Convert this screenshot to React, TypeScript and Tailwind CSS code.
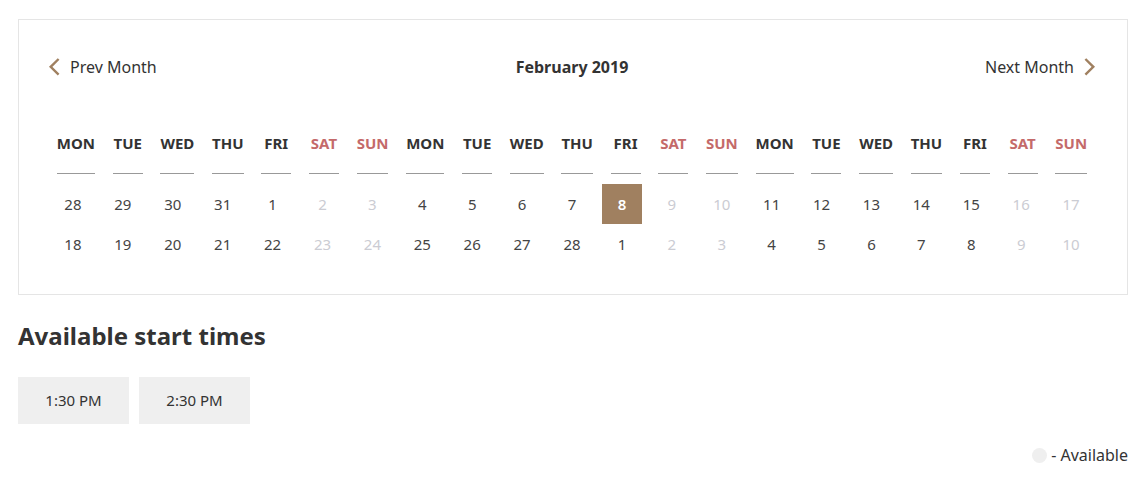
const WEEKDAYS = ["MON", "TUE", "WED", "THU", "FRI", "SAT", "SUN"];
const HEADINGS = [...WEEKDAYS, ...WEEKDAYS, ...WEEKDAYS];
const ROWS = [
  [28, 29, 30, 31, 1, 2, 3, 4, 5, 6, 7, 8, 9, 10, 11, 12, 13, 14, 15, 16, 17],
  [18, 19, 20, 21, 22, 23, 24, 25, 26, 27, 28, 1, 2, 3, 4, 5, 6, 7, 8, 9, 10],
];
const TIMES = ["1:30 PM", "2:30 PM"];

const isWeekend = (column: number) => column % 7 > 4;

function Chevron({ direction }: { direction: "left" | "right" }) {
  return (
    <svg
      className="h-[18px] w-3 shrink-0"
      viewBox="0 0 12 18"
      fill="none"
      stroke="#a08060"
      strokeWidth="2.4"
      aria-hidden="true"
    >
      <path d={direction === "left" ? "M10.6 1 2.7 8.8l7.9 7.8" : "M1.4 1 9.3 8.8l-7.9 7.8"} />
    </svg>
  );
}

function Day({ day, column, selected }: { day: number; column: number; selected: boolean }) {
  const tone = selected
    ? "bg-[#a08060] font-semibold text-white"
    : isWeekend(column)
      ? "text-[#cbccd3]"
      : "text-[#444444]";
  return (
    <button
      type="button"
      disabled={isWeekend(column)}
      aria-pressed={selected}
      className={`size-10 text-[15px] leading-5 ${tone}`}
    >
      {day}
    </button>
  );
}

export default function App() {
  return (
    <main className="bg-white pt-[19px] pr-5 pl-[18px] font-['Noto_Sans',sans-serif] text-base text-[#333333]">
      <section className="border border-[#e5e5e5] pt-[35px] pr-[31px] pb-[30px] pl-[29px]">
        <header className="grid grid-cols-3 items-center leading-6">
          <button type="button" className="flex items-center gap-2.5 justify-self-start">
            <Chevron direction="left" />
            Prev Month
          </button>
          <h2 className="text-center font-bold">February 2019</h2>
          <button type="button" className="flex items-center gap-2.5 justify-self-end">
            Next Month
            <Chevron direction="right" />
          </button>
        </header>

        <table className="mt-[53px] block" aria-label="February 2019">
          <thead className="block">
            <tr className="flex justify-around pb-2.5">
              {HEADINGS.map((name, column) => (
                <th
                  key={column}
                  scope="col"
                  className={`min-w-[30px] border-b border-[#999999] pb-[19px] text-[15px] leading-[22px] font-bold ${
                    isWeekend(column) ? "text-[#c46a6a]" : ""
                  }`}
                >
                  <span className="block">{name}</span>
                </th>
              ))}
            </tr>
          </thead>
          <tbody className="block">
            {ROWS.map((row, index) => (
              <tr key={index} className="flex">
                {row.map((day, column) => (
                  <td key={column} className="flex flex-1 justify-center p-0">
                    <Day day={day} column={column} selected={index === 0 && column === 11} />
                  </td>
                ))}
              </tr>
            ))}
          </tbody>
        </table>
      </section>

      <h2 className="mt-[23px] text-2xl leading-9 font-bold">Available start times</h2>
      <div className="mt-[23px] flex gap-2.5">
        {TIMES.map((time) => (
          <button
            key={time}
            type="button"
            className="min-w-[111px] bg-[#efefef] px-6 py-3 text-[15px] leading-[23px]"
          >
            {time}
          </button>
        ))}
      </div>
      <p className="mt-[19px] flex items-center justify-end gap-1 leading-6">
        <span className="size-[15px] rounded-full bg-[#efefef]" />- Available
      </p>
    </main>
  );
}
